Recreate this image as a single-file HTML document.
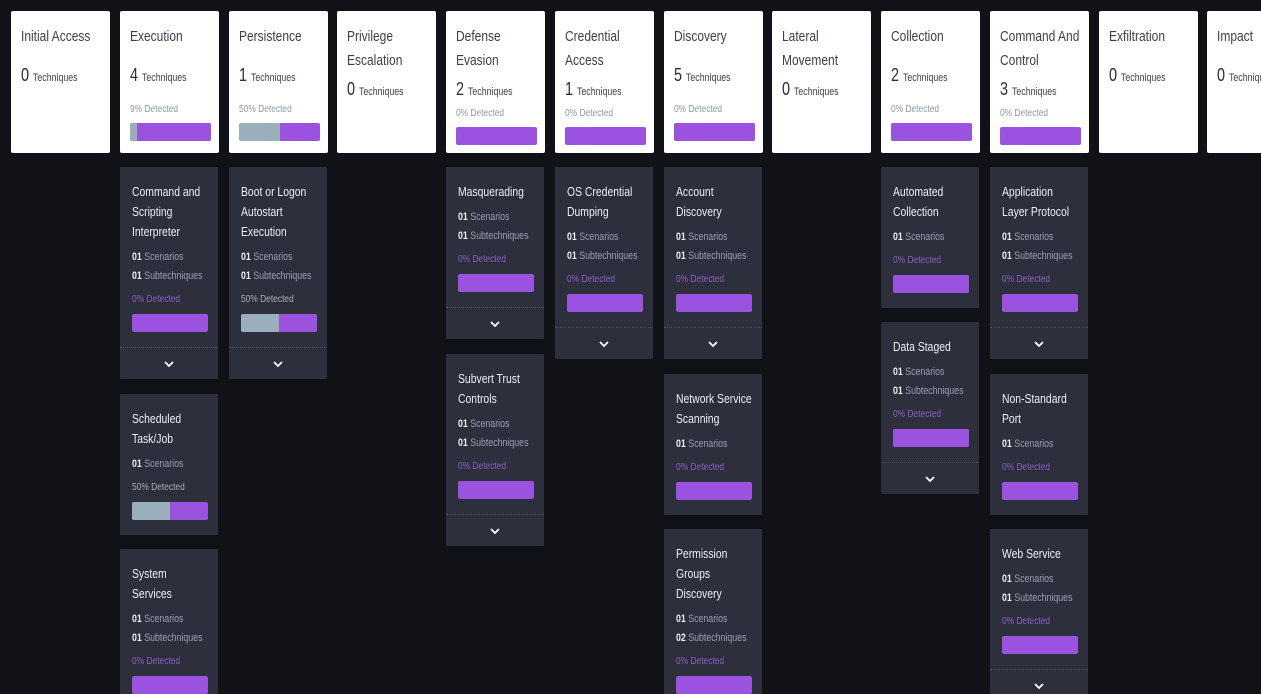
<!DOCTYPE html>
<html style="overflow:hidden;height:694px"><head><meta charset="utf-8"><style>
*{box-sizing:border-box;margin:0;padding:0}
body{width:1261px;height:694px;overflow:hidden;background:#111218;font-family:"Liberation Sans",sans-serif;position:relative}
.t,.n,.d,.s{white-space:nowrap;transform:scaleX(.8);transform-origin:left center;width:125%}
.h{position:absolute;top:11px;width:99px;height:142px;background:#fff;border-radius:2px;padding:14px 0 0 10px;color:#3a3d4a;overflow:hidden}
.h .t{font-size:15px;line-height:24px;color:#3d4050}
.h .n{font-size:18px;line-height:26px;margin-top:3px;color:#2a2d3a}
.h .n span{font-size:11px;color:#3d4050}
.h .d{font-size:10.5px;color:#8e98a8;margin-top:1px;line-height:14px}
.h.one .n{margin-top:13px}
.h.one .d{margin-top:11px}
.bar{height:18px;border-radius:2px;background:#9b52df;display:flex;overflow:hidden;width:81px;margin-top:7px}
.bar i{background:#9aaebb;display:block;height:100%}
.c{position:absolute;width:98px;background:#2d303c;color:#eceef3;border-radius:1px;overflow:hidden}
.c .in{padding:15px 0 15px 12px}
.c .t{font-size:13px;line-height:20px}
.c .s{font-size:11px;line-height:19px;color:#9a9eb0}
.c .s b{color:#eceef3;font-weight:bold}
.c .s1{margin-top:6px}
.c .d{font-size:10.5px;line-height:14px;margin-top:6px;color:#8b5fc4}
.c .d.g{color:#a9adba}
.c .bar{width:76px;margin-top:8px}
.c .f{height:32px;border-top:1px dotted #4a4d5a;display:flex;align-items:center;justify-content:center;margin-top:1px}
.c .in.hf{padding-bottom:14px}
</style></head><body>

<div class="h one" style="left:11px"><div class="t">Initial Access</div><div class="n">0 <span>Techniques</span></div></div>
<div class="h one" style="left:120px"><div class="t">Execution</div><div class="n">4 <span>Techniques</span></div><div class="d">9% Detected</div><div class="bar"><i style="width:7px"></i></div></div>
<div class="h one" style="left:229px"><div class="t">Persistence</div><div class="n">1 <span>Techniques</span></div><div class="d">50% Detected</div><div class="bar"><i style="width:41px"></i></div></div>
<div class="h" style="left:337px"><div class="t">Privilege<br>Escalation</div><div class="n">0 <span>Techniques</span></div></div>
<div class="h" style="left:446px"><div class="t">Defense<br>Evasion</div><div class="n">2 <span>Techniques</span></div><div class="d">0% Detected</div><div class="bar"></div></div>
<div class="h" style="left:555px"><div class="t">Credential<br>Access</div><div class="n">1 <span>Techniques</span></div><div class="d">0% Detected</div><div class="bar"></div></div>
<div class="h one" style="left:664px"><div class="t">Discovery</div><div class="n">5 <span>Techniques</span></div><div class="d">0% Detected</div><div class="bar"></div></div>
<div class="h" style="left:772px"><div class="t">Lateral<br>Movement</div><div class="n">0 <span>Techniques</span></div></div>
<div class="h one" style="left:881px"><div class="t">Collection</div><div class="n">2 <span>Techniques</span></div><div class="d">0% Detected</div><div class="bar"></div></div>
<div class="h" style="left:990px"><div class="t">Command And<br>Control</div><div class="n">3 <span>Techniques</span></div><div class="d">0% Detected</div><div class="bar"></div></div>
<div class="h one" style="left:1099px"><div class="t">Exfiltration</div><div class="n">0 <span>Techniques</span></div></div>
<div class="h one" style="left:1207px"><div class="t">Impact</div><div class="n">0 <span>Techniques</span></div></div>

<div class="c" style="left:120px;top:167px"><div class="in hf"><div class="t">Command and<br>Scripting<br>Interpreter</div><div class="s s1"><b>01</b> Scenarios</div><div class="s"><b>01</b> Subtechniques</div><div class="d">0% Detected</div><div class="bar"></div></div><div class="f"><svg width="12" height="8" viewBox="0 0 12 8"><path d="M2 2l4 4 4-4" stroke="#fff" stroke-width="1.8" fill="none"/></svg></div></div>
<div class="c" style="left:120px;top:394px"><div class="in"><div class="t">Scheduled<br>Task/Job</div><div class="s s1"><b>01</b> Scenarios</div><div class="d g">50% Detected</div><div class="bar"><i style="width:38px"></i></div></div></div>
<div class="c" style="left:120px;top:549px;height:160px"><div class="in"><div class="t">System<br>Services</div><div class="s s1"><b>01</b> Scenarios</div><div class="s"><b>01</b> Subtechniques</div><div class="d">0% Detected</div><div class="bar"></div></div></div>

<div class="c" style="left:229px;top:167px"><div class="in hf"><div class="t">Boot or Logon<br>Autostart<br>Execution</div><div class="s s1"><b>01</b> Scenarios</div><div class="s"><b>01</b> Subtechniques</div><div class="d g">50% Detected</div><div class="bar"><i style="width:38px"></i></div></div><div class="f"><svg width="12" height="8" viewBox="0 0 12 8"><path d="M2 2l4 4 4-4" stroke="#fff" stroke-width="1.8" fill="none"/></svg></div></div>

<div class="c" style="left:446px;top:167px"><div class="in hf"><div class="t">Masquerading</div><div class="s s1"><b>01</b> Scenarios</div><div class="s"><b>01</b> Subtechniques</div><div class="d">0% Detected</div><div class="bar"></div></div><div class="f"><svg width="12" height="8" viewBox="0 0 12 8"><path d="M2 2l4 4 4-4" stroke="#fff" stroke-width="1.8" fill="none"/></svg></div></div>
<div class="c" style="left:446px;top:354px"><div class="in hf"><div class="t">Subvert Trust<br>Controls</div><div class="s s1"><b>01</b> Scenarios</div><div class="s"><b>01</b> Subtechniques</div><div class="d">0% Detected</div><div class="bar"></div></div><div class="f"><svg width="12" height="8" viewBox="0 0 12 8"><path d="M2 2l4 4 4-4" stroke="#fff" stroke-width="1.8" fill="none"/></svg></div></div>

<div class="c" style="left:555px;top:167px"><div class="in hf"><div class="t">OS Credential<br>Dumping</div><div class="s s1"><b>01</b> Scenarios</div><div class="s"><b>01</b> Subtechniques</div><div class="d">0% Detected</div><div class="bar"></div></div><div class="f"><svg width="12" height="8" viewBox="0 0 12 8"><path d="M2 2l4 4 4-4" stroke="#fff" stroke-width="1.8" fill="none"/></svg></div></div>

<div class="c" style="left:664px;top:167px"><div class="in hf"><div class="t">Account<br>Discovery</div><div class="s s1"><b>01</b> Scenarios</div><div class="s"><b>01</b> Subtechniques</div><div class="d">0% Detected</div><div class="bar"></div></div><div class="f"><svg width="12" height="8" viewBox="0 0 12 8"><path d="M2 2l4 4 4-4" stroke="#fff" stroke-width="1.8" fill="none"/></svg></div></div>
<div class="c" style="left:664px;top:374px"><div class="in"><div class="t">Network Service<br>Scanning</div><div class="s s1"><b>01</b> Scenarios</div><div class="d">0% Detected</div><div class="bar"></div></div></div>
<div class="c" style="left:664px;top:529px;height:180px"><div class="in"><div class="t">Permission<br>Groups<br>Discovery</div><div class="s s1"><b>01</b> Scenarios</div><div class="s"><b>02</b> Subtechniques</div><div class="d">0% Detected</div><div class="bar"></div></div></div>

<div class="c" style="left:881px;top:167px"><div class="in"><div class="t">Automated<br>Collection</div><div class="s s1"><b>01</b> Scenarios</div><div class="d">0% Detected</div><div class="bar"></div></div></div>
<div class="c" style="left:881px;top:322px"><div class="in hf"><div class="t">Data Staged</div><div class="s s1"><b>01</b> Scenarios</div><div class="s"><b>01</b> Subtechniques</div><div class="d">0% Detected</div><div class="bar"></div></div><div class="f"><svg width="12" height="8" viewBox="0 0 12 8"><path d="M2 2l4 4 4-4" stroke="#fff" stroke-width="1.8" fill="none"/></svg></div></div>

<div class="c" style="left:990px;top:167px"><div class="in hf"><div class="t">Application<br>Layer Protocol</div><div class="s s1"><b>01</b> Scenarios</div><div class="s"><b>01</b> Subtechniques</div><div class="d">0% Detected</div><div class="bar"></div></div><div class="f"><svg width="12" height="8" viewBox="0 0 12 8"><path d="M2 2l4 4 4-4" stroke="#fff" stroke-width="1.8" fill="none"/></svg></div></div>
<div class="c" style="left:990px;top:374px"><div class="in"><div class="t">Non-Standard<br>Port</div><div class="s s1"><b>01</b> Scenarios</div><div class="d">0% Detected</div><div class="bar"></div></div></div>
<div class="c" style="left:990px;top:529px;height:180px"><div class="in hf"><div class="t">Web Service</div><div class="s s1"><b>01</b> Scenarios</div><div class="s"><b>01</b> Subtechniques</div><div class="d">0% Detected</div><div class="bar"></div></div><div class="f"><svg width="12" height="8" viewBox="0 0 12 8"><path d="M2 2l4 4 4-4" stroke="#fff" stroke-width="1.8" fill="none"/></svg></div></div>

</body></html>
